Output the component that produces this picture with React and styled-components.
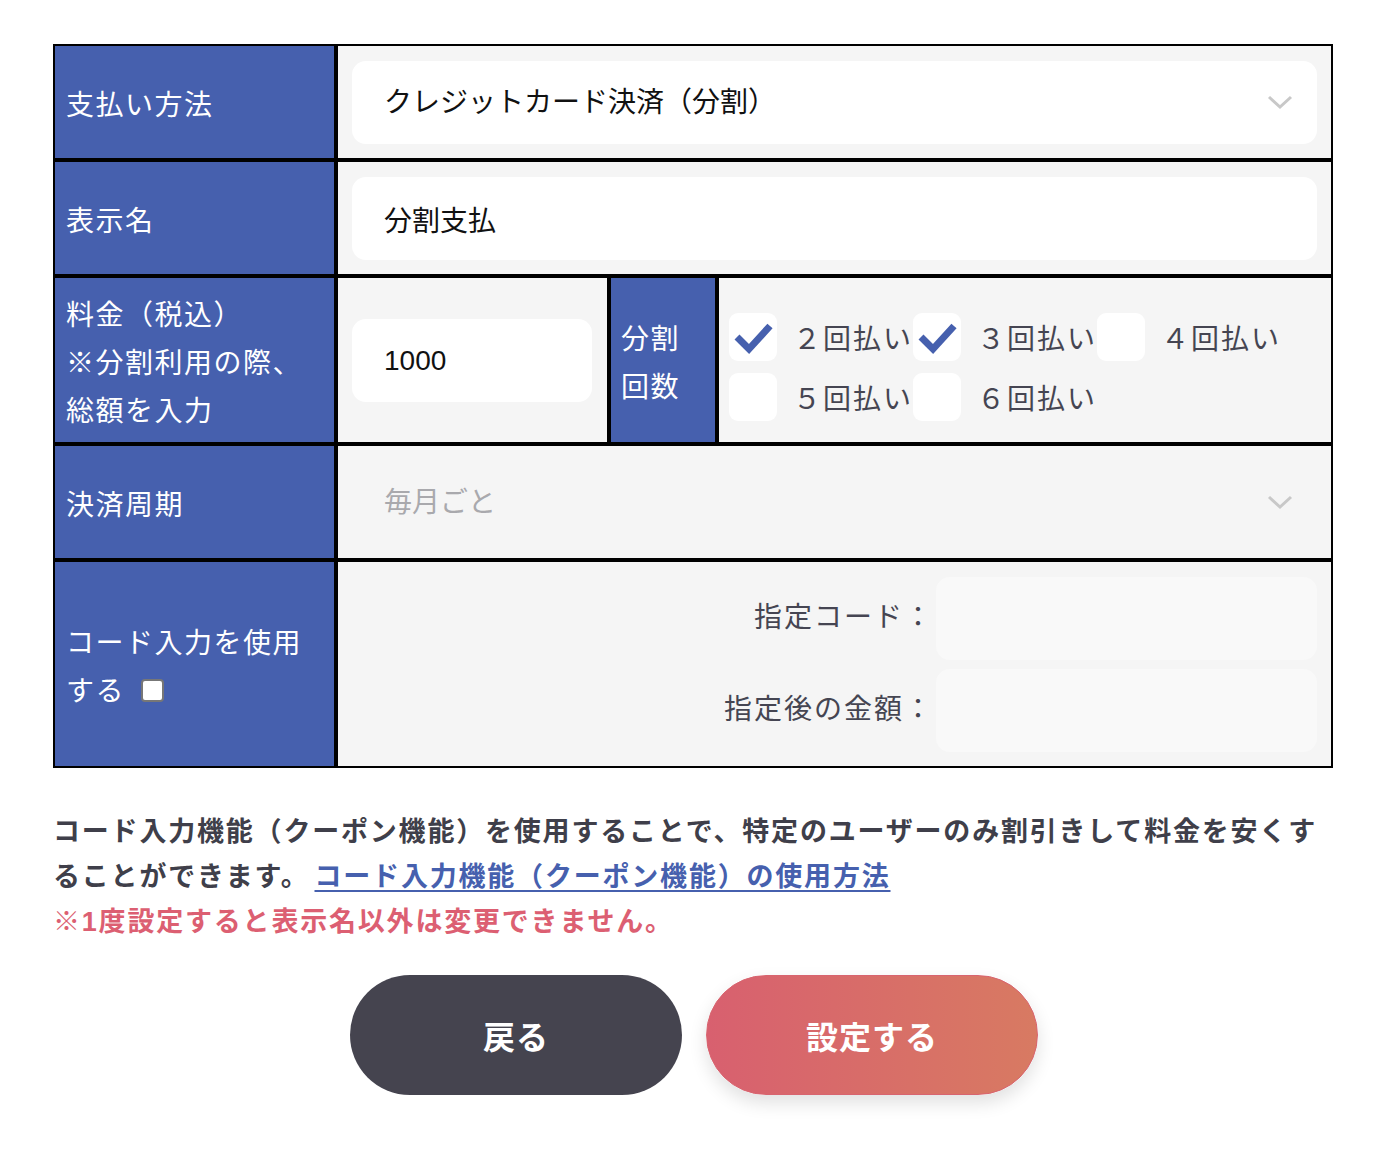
import styled, { createGlobalStyle } from "styled-components";

const GlobalStyle = createGlobalStyle`
  body {
    margin: 0;
    background: #fff;
    font-family: "Liberation Sans", "Noto Sans CJK JP", sans-serif;
    color: #111;
  }
`;

const Page = styled.div`
  width: 1280px;
  margin: 44px auto 0;
  padding-bottom: 64px;
`;

const Table = styled.div`
  display: flex;
  flex-direction: column;
  gap: 4px;
  border: 2px solid #000;
  background: #000;
`;

const Row = styled.div`
  display: flex;
  gap: 4px;
  height: ${(p) => p.$h}px;
`;

const Label = styled.div`
  width: ${(p) => p.$w || 279}px;
  flex-shrink: 0;
  box-sizing: border-box;
  padding: 8px ${(p) => p.$pad || 11}px 0;
  display: flex;
  align-items: center;
  background: #4660ae;
  color: #fff;
  font-size: 28px;
  line-height: 48px;
  letter-spacing: 1.5px;
`;

const Cell = styled.div`
  flex: ${(p) => (p.$w ? "none" : 1)};
  width: ${(p) => (p.$w ? `${p.$w}px` : "auto")};
  box-sizing: border-box;
  padding: 15px 14px 14px;
  display: flex;
  align-items: center;
  background: #f5f5f5;
`;

const SelectWrap = styled.div`
  position: relative;
  flex: 1;
  height: 83px;
`;

const Select = styled.select`
  appearance: none;
  width: 100%;
  height: 100%;
  border: none;
  outline: none;
  border-radius: 14px;
  padding: 0 0 0 32px;
  background: ${(p) => (p.disabled ? "transparent" : "#fff")};
  color: ${(p) => (p.disabled ? "#a9a9ad" : "#111")};
  font-family: inherit;
  font-size: 28px;
  opacity: 1;
`;

const Chevron = styled.svg`
  position: absolute;
  right: 24px;
  top: 34px;
  pointer-events: none;
`;

const TextInput = styled.input`
  width: ${(p) => (p.$w ? `${p.$w}px` : "100%")};
  height: 83px;
  box-sizing: border-box;
  border: none;
  outline: none;
  border-radius: 14px;
  padding: 0 0 0 32px;
  background: ${(p) => (p.disabled ? "#f9f9f9" : "#fff")};
  color: #111;
  font-family: inherit;
  font-size: 28px;
`;

const Choices = styled.div`
  flex: 1;
  box-sizing: border-box;
  padding: 14px 0 0 10px;
  display: flex;
  flex-wrap: wrap;
  align-content: center;
  row-gap: 12px;
  background: #f5f5f5;
`;

const Choice = styled.label`
  width: 184px;
  display: flex;
  align-items: center;
  gap: 16px;
  font-size: 28px;
  letter-spacing: 2px;
  color: #454552;
  white-space: nowrap;
`;

const Box = styled.span`
  width: 48px;
  height: 48px;
  flex-shrink: 0;
  border-radius: 9px;
  background: #fff;
  display: flex;
`;

const CodeGrid = styled.div`
  flex: 1;
  display: grid;
  grid-template-columns: 1fr 381px;
  column-gap: 2px;
  row-gap: 9px;
  align-items: center;
`;

const CodeLabel = styled.span`
  padding-bottom: 8px;
  text-align: right;
  font-size: 28px;
  letter-spacing: 2px;
  color: #454552;
`;

const SmallCheck = styled.input`
  appearance: none;
  width: 23px;
  height: 23px;
  margin: 0 0 0 16px;
  vertical-align: -1px;
  box-sizing: border-box;
  border: 2px solid #777;
  border-radius: 4px;
  background: #fff;
`;

const Notes = styled.div`
  margin-top: 42px;
  font-size: 27px;
  font-weight: 700;
  letter-spacing: 1.8px;
  line-height: 45px;
  color: #3f3f4a;
`;

const HelpLink = styled.a`
  margin-left: 5px;
  color: #4660ae;
  text-decoration: underline;
  text-underline-offset: 4px;
`;

const Warning = styled.div`
  color: #dc5f72;
  line-height: 44px;
`;

const Buttons = styled.div`
  display: flex;
  justify-content: center;
  gap: 24px;
  margin-top: 31px;
  padding-left: 2px;
`;

const Button = styled.button`
  width: 332px;
  height: 120px;
  border-radius: 60px;
  border: ${(p) => (p.$primary ? "1px solid #d8646f" : "none")};
  background: ${(p) =>
    p.$primary ? "linear-gradient(90deg, #d8606f 0%, #d87a62 100%)" : "#45444f"};
  box-shadow: ${(p) => (p.$primary ? "0 8px 18px rgba(0, 0, 0, 0.12)" : "none")};
  color: #fff;
  font-family: "Noto Sans CJK JP", sans-serif;
  font-size: 32px;
  font-weight: 700;
  letter-spacing: 1px;
`;

const ChevronIcon = () => (
  <Chevron width="26" height="15" viewBox="0 0 26 15">
    <polyline points="2,2 13,12 24,2" fill="none" stroke="#c8c8c8" strokeWidth="3" />
  </Chevron>
);

const CheckMark = () => (
  <svg width="48" height="48" viewBox="0 0 48 48">
    <polyline points="8,24 20,36 41,13" fill="none" stroke="#4660ae" strokeWidth="7" />
  </svg>
);

const counts = [
  { n: "２", on: true },
  { n: "３", on: true },
  { n: "４", on: false },
  { n: "５", on: false },
  { n: "６", on: false },
];

export default function App() {
  return (
    <>
      <GlobalStyle />
      <Page>
        <Table>
          <Row $h={112}>
            <Label>支払い方法</Label>
            <Cell>
              <SelectWrap>
                <Select defaultValue="credit">
                  <option value="credit">クレジットカード決済（分割）</option>
                </Select>
                <ChevronIcon />
              </SelectWrap>
            </Cell>
          </Row>
          <Row $h={112}>
            <Label>表示名</Label>
            <Cell>
              <TextInput defaultValue="分割支払" />
            </Cell>
          </Row>
          <Row $h={164}>
            <Label>
              <div>
                料金（税込）
                <br />
                ※分割利用の際、
                <br />
                総額を入力
              </div>
            </Label>
            <Cell $w={269}>
              <TextInput $w={240} defaultValue="1000" />
            </Cell>
            <Label $w={104} $pad={10}>
              <div>
                分割
                <br />
                回数
              </div>
            </Label>
            <Choices>
              {counts.map((c) => (
                <Choice key={c.n}>
                  <Box>{c.on && <CheckMark />}</Box>
                  {c.n}回払い
                </Choice>
              ))}
            </Choices>
          </Row>
          <Row $h={112}>
            <Label>決済周期</Label>
            <Cell>
              <SelectWrap>
                <Select disabled defaultValue="monthly">
                  <option value="monthly">毎月ごと</option>
                </Select>
                <ChevronIcon />
              </SelectWrap>
            </Cell>
          </Row>
          <Row $h={204}>
            <Label>
              <div>
                コード入力を使用
                <br />
                する
                <SmallCheck type="checkbox" />
              </div>
            </Label>
            <Cell>
              <CodeGrid>
                <CodeLabel>指定コード：</CodeLabel>
                <TextInput disabled />
                <CodeLabel>指定後の金額：</CodeLabel>
                <TextInput disabled />
              </CodeGrid>
            </Cell>
          </Row>
        </Table>
        <Notes>
          コード入力機能（クーポン機能）を使用することで、特定のユーザーのみ割引きして料金を安くすることができます。
          <HelpLink href="#">コード入力機能（クーポン機能）の使用方法</HelpLink>
          <Warning>※1度設定すると表示名以外は変更できません。</Warning>
        </Notes>
        <Buttons>
          <Button>戻る</Button>
          <Button $primary>設定する</Button>
        </Buttons>
      </Page>
    </>
  );
}
